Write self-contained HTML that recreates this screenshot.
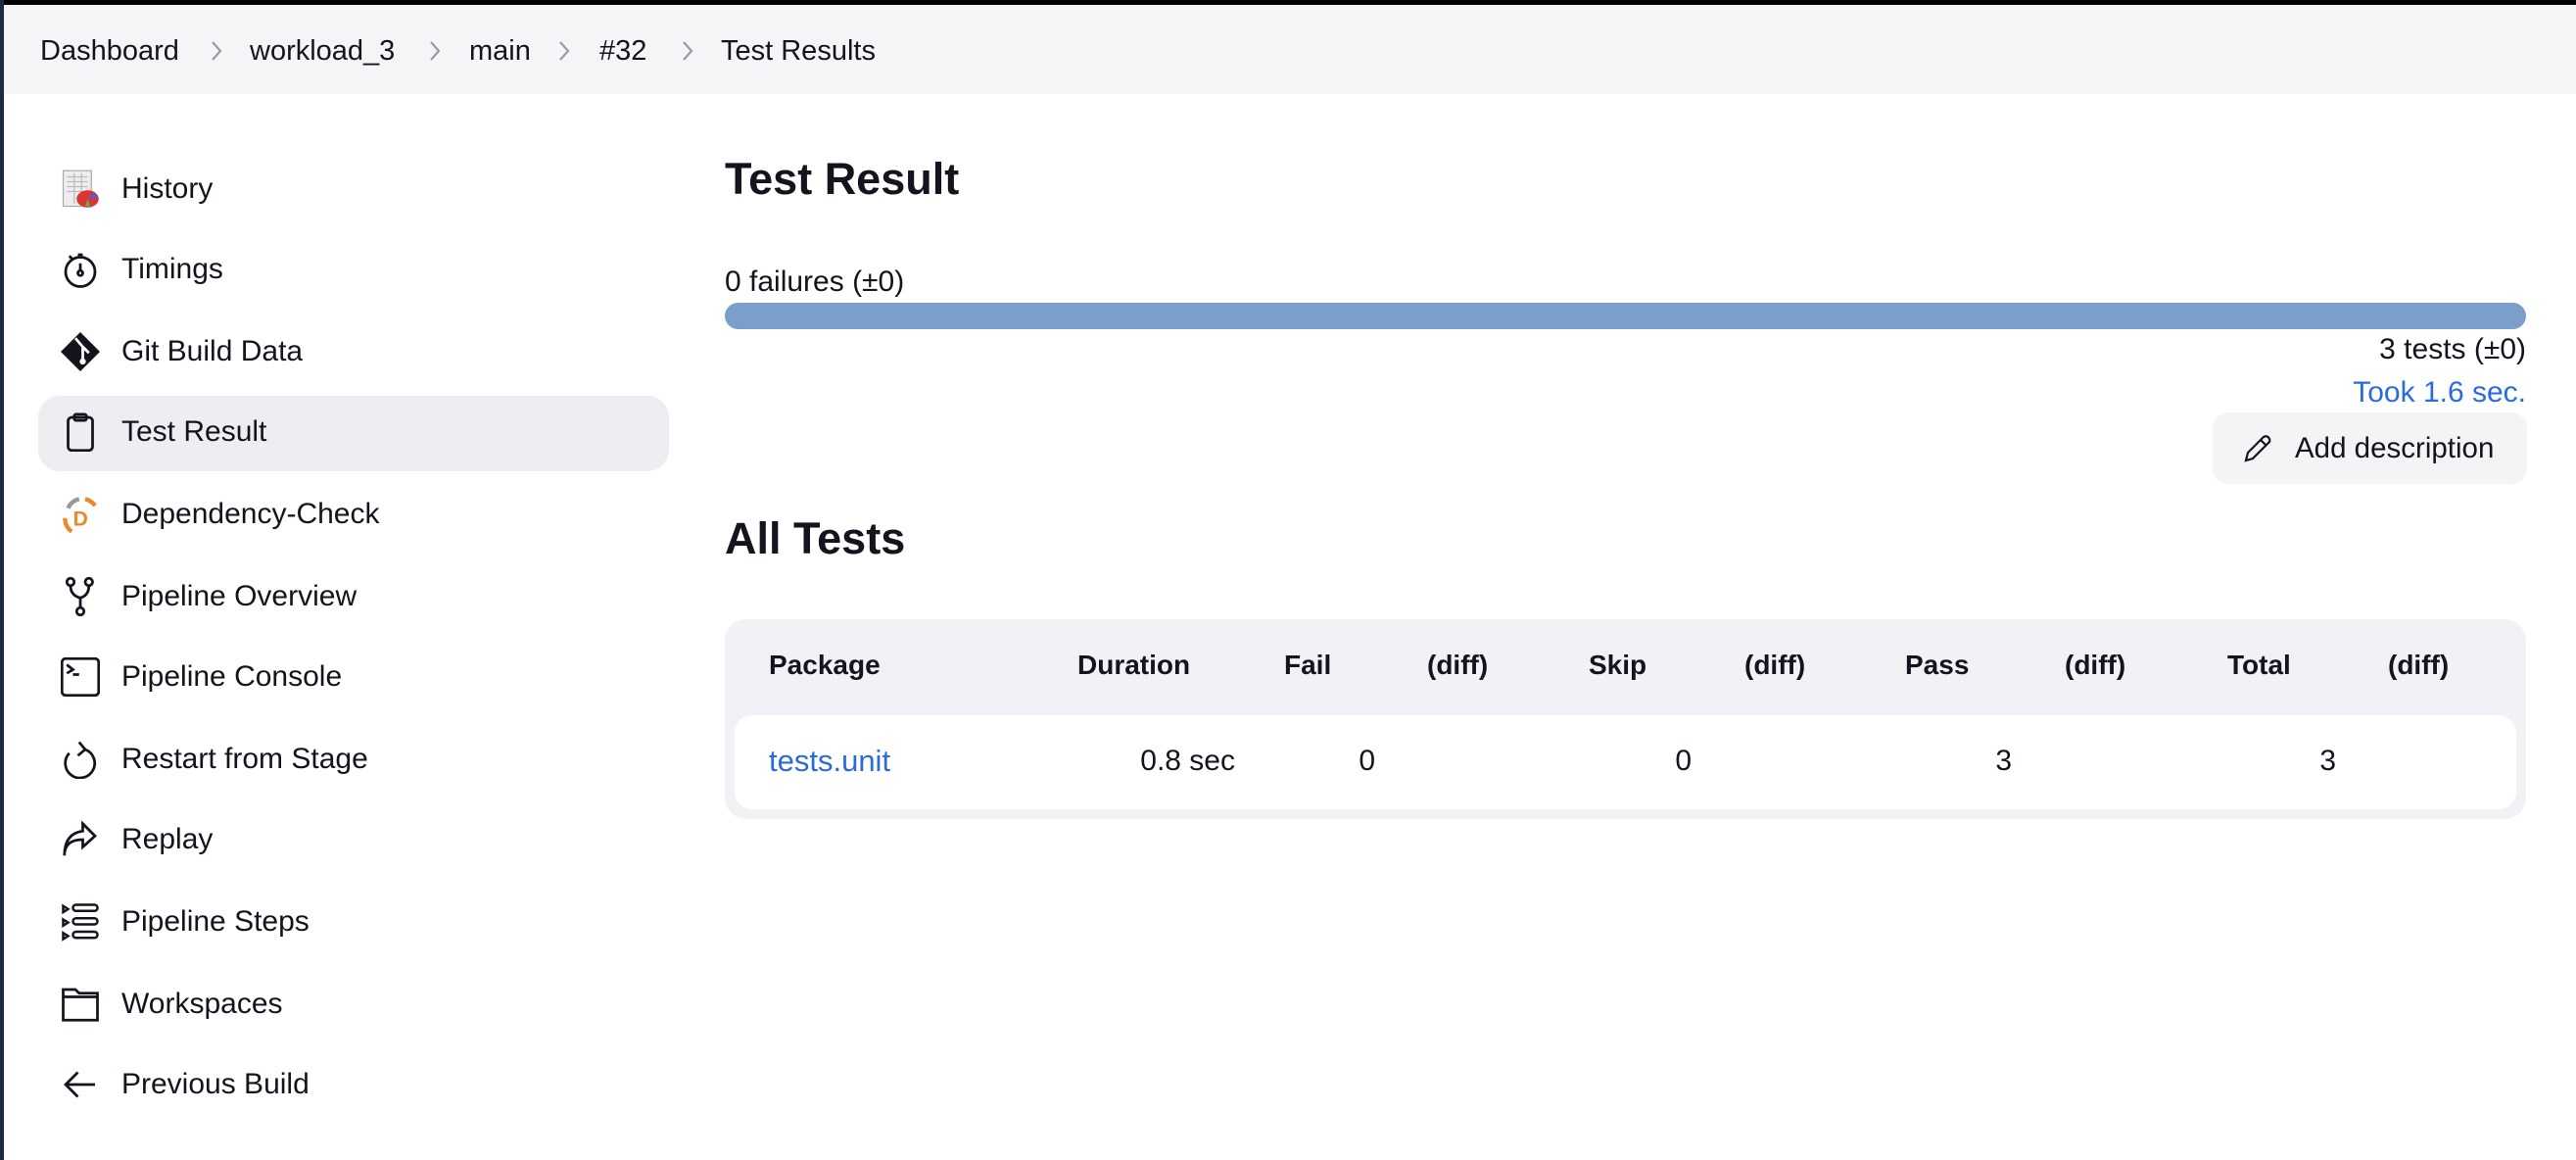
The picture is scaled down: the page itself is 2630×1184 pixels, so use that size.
<!DOCTYPE html>
<html><head><meta charset="utf-8"><style>
*{margin:0;padding:0;box-sizing:border-box}
body{width:2630px;height:1184px;background:#fff;font-family:"Liberation Sans",sans-serif;color:#14141f;position:relative;overflow:hidden}
.abs{position:absolute;white-space:nowrap}
.t{font-size:30px;line-height:36px}
.b{font-size:29px;line-height:36px;transform:translateY(-18px)}
.side{position:absolute;left:124px;font-size:30px;line-height:36px;transform:translateY(-18px)}
.ic{position:absolute;left:62px;width:40px;height:40px;transform:translateY(-20px)}
.h{font-size:28px;font-weight:bold;line-height:34px;transform:translateY(-17px)}
.v{font-size:30px;line-height:36px;transform:translateY(-18px)}
.chev{position:absolute;width:14px;height:24px;top:40px}
</style></head><body>
<div class="abs" style="left:0;top:0;width:2630px;height:5px;background:#000"></div>
<div class="abs" style="left:0;top:0;width:4px;height:1184px;background:#1c2a44"></div>
<div class="abs" style="left:4px;top:5px;width:2626px;height:91px;background:#f5f5f7"></div>
<div class="abs b" style="left:41px;top:52px">Dashboard</div>
<svg class="chev" style="left:214px" viewBox="0 0 14 24" fill="none" stroke="#9a9aa6" stroke-width="2.2"><path d="M3 3 L11 12 L3 21"/></svg>
<div class="abs b" style="left:255px;top:52px">workload_3</div>
<svg class="chev" style="left:437px" viewBox="0 0 14 24" fill="none" stroke="#9a9aa6" stroke-width="2.2"><path d="M3 3 L11 12 L3 21"/></svg>
<div class="abs b" style="left:479px;top:52px">main</div>
<svg class="chev" style="left:569px" viewBox="0 0 14 24" fill="none" stroke="#9a9aa6" stroke-width="2.2"><path d="M3 3 L11 12 L3 21"/></svg>
<div class="abs b" style="left:612px;top:52px">#32</div>
<svg class="chev" style="left:695px" viewBox="0 0 14 24" fill="none" stroke="#9a9aa6" stroke-width="2.2"><path d="M3 3 L11 12 L3 21"/></svg>
<div class="abs b" style="left:736px;top:52px">Test Results</div>

<div class="abs" style="left:39px;top:404px;width:644px;height:77px;background:#ededf2;border-radius:22px"></div>

<svg class="ic" style="top:193px" viewBox="0 0 32 32"><rect x="2" y="1" width="23" height="29" fill="#eee" stroke="#aaa"/><g stroke="#bbb"><line x1="5" y1="6" x2="22" y2="6"/><line x1="5" y1="10" x2="22" y2="10"/><line x1="5" y1="14" x2="22" y2="14"/><line x1="5" y1="18" x2="22" y2="18"/><line x1="11" y1="3" x2="11" y2="28"/><line x1="17" y1="3" x2="17" y2="28"/></g><ellipse cx="22" cy="24" rx="9" ry="7" fill="#d33"/><path d="M22 24 L27 19 L31 23Z" fill="#46c"/><path d="M22 24 L20 30 L24 30Z" fill="#5b5"/></svg>
<div class="side" style="top:193px">History</div>
<svg class="ic" style="top:275px" viewBox="0 0 32 32" fill="none" stroke="#14141f" stroke-width="2.2"><circle cx="16" cy="18" r="12"/><line x1="16" y1="11" x2="16" y2="18"/><circle cx="16" cy="19" r="2"/><line x1="7" y1="5" x2="10" y2="8"/><line x1="14" y1="4" x2="18" y2="4"/></svg>
<div class="side" style="top:275px">Timings</div>
<svg class="ic" style="top:359px" viewBox="0 0 32 32"><path d="M16 0 L32 16 L16 32 L0 16Z" fill="#14141f"/><g stroke="#fff" stroke-width="2.2" fill="none"><line x1="12" y1="5" x2="18" y2="12"/><line x1="18" y1="12" x2="18" y2="23"/><line x1="18" y1="12" x2="23" y2="17"/></g><circle cx="18" cy="24" r="2.5" fill="#fff"/></svg>
<div class="side" style="top:359px">Git Build Data</div>
<svg class="ic" style="top:441px" viewBox="0 0 32 32" fill="none" stroke="#14141f" stroke-width="2.2"><rect x="6" y="4" width="20" height="27" rx="3"/><rect x="11" y="1.5" width="10" height="5" rx="1.5"/></svg>
<div class="side" style="top:441px">Test Result</div>
<svg class="ic" style="top:525px" viewBox="0 0 32 32" fill="none" stroke-width="3.5"><path d="M6 11 A13 13 0 0 1 15 3.5" stroke="#999"/><path d="M20 3.5 A13 13 0 0 1 28 9" stroke="#e8892b"/><path d="M3.5 19 A13 13 0 0 0 9 30" stroke="#e8892b"/><text x="10" y="25" font-family="Liberation Sans" font-weight="bold" font-size="17" fill="#e8892b" stroke="none">D</text></svg>
<div class="side" style="top:525px">Dependency-Check</div>
<svg class="ic" style="top:609px" viewBox="0 0 32 32" fill="none" stroke="#14141f" stroke-width="2.2"><circle cx="8" cy="4" r="3"/><circle cx="23" cy="4" r="3"/><circle cx="16" cy="28" r="3"/><path d="M8 7 Q8 15 16 17 Q23 15 23 7 M16 17 V25"/></svg>
<div class="side" style="top:609px">Pipeline Overview</div>
<svg class="ic" style="top:691px" viewBox="0 0 32 32" fill="none" stroke="#14141f" stroke-width="2.2"><rect x="1" y="1" width="30" height="30" rx="3"/><path d="M5 6 L10 10 L5 13 M10 14 H15"/></svg>
<div class="side" style="top:691px">Pipeline Console</div>
<svg class="ic" style="top:775px" viewBox="0 0 32 32" fill="none" stroke="#14141f" stroke-width="2.2"><path d="M20 8 A12 12 0 1 1 7 11"/><path d="M15 2 L20 8 L14 13"/></svg>
<div class="side" style="top:775px">Restart from Stage</div>
<svg class="ic" style="top:857px" viewBox="0 0 32 32" fill="none" stroke="#14141f" stroke-width="2.2"><path d="M3 29 Q3 16 18 16 V22 L28 13 L18 3 V9 Q3 11 3 29Z"/></svg>
<div class="side" style="top:857px">Replay</div>
<svg class="ic" style="top:941px" viewBox="0 0 32 32" fill="none" stroke="#14141f" stroke-width="2"><path d="M2 3 L6 5.5 L2 8Z M2 14 L6 16.5 L2 19Z M2 25 L6 27.5 L2 30Z"/><rect x="10" y="2" width="20" height="5" rx="2.5"/><rect x="10" y="13" width="20" height="5" rx="2.5"/><rect x="10" y="24" width="20" height="5" rx="2.5"/></svg>
<div class="side" style="top:941px">Pipeline Steps</div>
<svg class="ic" style="top:1025px" viewBox="0 0 32 32" fill="none" stroke="#14141f" stroke-width="2.2"><path d="M2 4 H12 L15 7 H30 V29 H2Z M2 10 H30"/></svg>
<div class="side" style="top:1025px">Workspaces</div>
<svg class="ic" style="top:1107px" viewBox="0 0 32 32" fill="none" stroke="#14141f" stroke-width="2.2"><path d="M28 16 H5 M14 6 L4 16 L14 26"/></svg>
<div class="side" style="top:1107px">Previous Build</div>

<div class="abs" style="left:740px;top:155px;font-size:45px;font-weight:bold;line-height:56px">Test Result</div>
<div class="abs t" style="left:740px;top:270px">0 failures (±0)</div>
<div class="abs" style="left:740px;top:309px;width:1839px;height:27px;background:#7b9fcb;border-radius:14px"></div>
<div class="abs t" style="right:51px;top:339px">3 tests (±0)</div>
<div class="abs t" style="right:51px;top:383px;color:#2a6ae0">Took 1.6 sec.</div>
<div class="abs" style="left:2259px;top:421px;width:321px;height:73px;background:#f4f4f6;border-radius:16px"></div>
<svg class="abs" style="left:2289px;top:442px" width="32" height="32" viewBox="0 0 32 32" fill="none" stroke="#14141f" stroke-width="2.2"><path d="M4 28 L6 20 L22 4 Q26 2 28 6 Q29 9 27 10 L11 26Z M19 7 L25 13"/></svg>
<div class="abs t" style="left:2343px;top:440px;font-size:29.5px">Add description</div>

<div class="abs" style="left:740px;top:522px;font-size:45px;font-weight:bold;line-height:56px">All Tests</div>
<div class="abs" style="left:740px;top:632px;width:1839px;height:204px;background:#f2f2f6;border-radius:22px"></div>
<div class="abs" style="left:750px;top:730px;width:1819px;height:96px;background:#fff;border-radius:18px"></div>
<div class="abs h" style="left:785px;top:679px">Package</div>
<div class="abs h" style="left:1100px;top:679px">Duration</div>
<div class="abs h" style="left:1311px;top:679px">Fail</div>
<div class="abs h" style="left:1457px;top:679px">(diff)</div>
<div class="abs h" style="left:1622px;top:679px">Skip</div>
<div class="abs h" style="left:1781px;top:679px">(diff)</div>
<div class="abs h" style="left:1945px;top:679px">Pass</div>
<div class="abs h" style="left:2108px;top:679px">(diff)</div>
<div class="abs h" style="left:2274px;top:679px">Total</div>
<div class="abs h" style="left:2438px;top:679px">(diff)</div>
<div class="abs v" style="left:785px;top:777px;color:#2a6ae0;font-size:31px">tests.unit</div>
<div class="abs v" style="right:1369px;top:777px">0.8 sec</div>
<div class="abs v" style="right:1226px;top:777px">0</div>
<div class="abs v" style="right:903px;top:777px">0</div>
<div class="abs v" style="right:576px;top:777px">3</div>
<div class="abs v" style="right:245px;top:777px">3</div>
</body></html>
